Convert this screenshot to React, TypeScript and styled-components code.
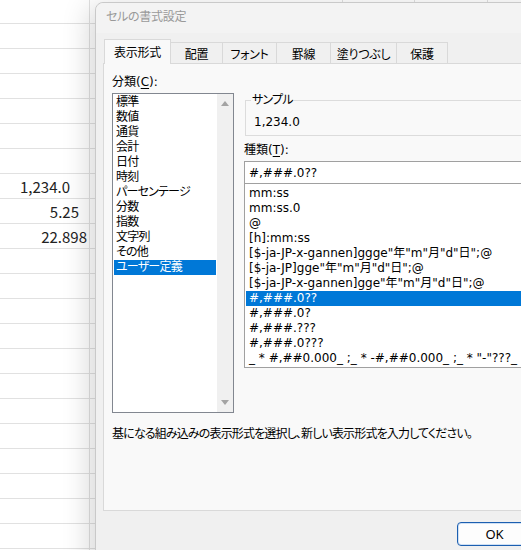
import { FC } from 'react'
import styled, { createGlobalStyle } from 'styled-components'

const GlobalStyle = createGlobalStyle`
  html, body {
    margin: 0;
    padding: 0;
    background: #fff;
    overflow: hidden;
  }
  body {
    font-family: "DejaVu Sans", "Noto Sans CJK JP", sans-serif;
    font-feature-settings: "palt";
    font-size: 12px;
    color: #000;
  }
`

const TABS = [
  { label: '表示形式', w: 67 },
  { label: '配置', w: 53 },
  { label: 'フォント', w: 55 },
  { label: '罫線', w: 55 },
  { label: '塗りつぶし', w: 67 },
  { label: '保護', w: 52 },
]

const CATEGORIES = ['標準', '数値', '通貨', '会計', '日付', '時刻', 'パーセンテージ', '分数', '指数', '文字列', 'その他', 'ユーザー定義']

const FORMATS = [
  'mm:ss',
  'mm:ss.0',
  '@',
  '[h]:mm:ss',
  '[$-ja-JP-x-gannen]ggge"年"m"月"d"日";@',
  '[$-ja-JP]gge"年"m"月"d"日";@',
  '[$-ja-JP-x-gannen]gge"年"m"月"d"日";@',
  '#,###.0??',
  '#,###.0?',
  '#,###.???',
  '#,###.0???',
  '_ * #,##0.000_ ;_ * -#,##0.000_ ;_ * "-"???_ ;_ @_ ',
]

// sheet rows: value cells sit in rows 7..9
const SHEET_VALUES: Record<number, { text: string, pad: number }> = {
  7: { text: '1,234.0', pad: 19 },
  8: { text: '5.25', pad: 10 },
  9: { text: '22.898', pad: 2 },
}
const COLUMN_WIDTHS = [90, 253, 72, 73, 73]

const App: FC = () => {
  return (
    <Screen>
      <GlobalStyle />
      <Sheet>
        {Array.from({ length: 23 }).map((_, r) => (
          <SheetRow key={r} $first={r === 0}>
            {COLUMN_WIDTHS.map((w, c) => (
              <SheetCell key={c} $w={w} $pad={c === 0 && SHEET_VALUES[r] ? SHEET_VALUES[r].pad : 4}>
                {c === 0 && SHEET_VALUES[r] ? SHEET_VALUES[r].text : ''}
              </SheetCell>
            ))}
          </SheetRow>
        ))}
      </Sheet>

      <Dialog>
        <TitleBar>セルの書式設定</TitleBar>
        <DialogBody>
          <TabStrip>
            {TABS.map((t, i) => (
              <Tab key={t.label} $w={t.w} $active={i === 0}>{t.label}</Tab>
            ))}
          </TabStrip>
          <Panel>
            <LeftColumn>
              <FieldLabel>分類(<u>C</u>):</FieldLabel>
              <CategoryBox>
                <ItemColumn>
                  {CATEGORIES.map((c, i) => (
                    <ListItem key={c} $selected={i === CATEGORIES.length - 1} $pad={2} $kana>{c}</ListItem>
                  ))}
                </ItemColumn>
                <ScrollTrack>
                  <Arrow $dir="up" />
                  <Arrow $dir="down" />
                </ScrollTrack>
              </CategoryBox>
            </LeftColumn>

            <RightColumn>
              <SampleGroup>
                <SampleLegend>サンプル</SampleLegend>
                <SampleValue>1,234.0</SampleValue>
              </SampleGroup>
              <FieldLabel>種類(<u>T</u>):</FieldLabel>
              <FormatInput>#,###.0??</FormatInput>
              <FormatList>
                {FORMATS.map((f, i) => (
                  <ListItem key={f} $selected={i === 7} $pad={3}>{f}</ListItem>
                ))}
              </FormatList>
            </RightColumn>

            <Description>基になる組み込みの表示形式を選択し、新しい表示形式を入力してください。</Description>
          </Panel>
          <Footer>
            <DialogButton $primary>OK</DialogButton>
            <DialogButton>キャンセル</DialogButton>
          </Footer>
        </DialogBody>
      </Dialog>
    </Screen>
  )
}

export default App

const Screen = styled.div`
  position: relative;
  width: 521px;
  height: 550px;
  overflow: hidden;
  background: #fff;
`
const Sheet = styled.div`
  display: flex;
  flex-direction: column;
`
const SheetRow = styled.div<{ $first?: boolean }>`
  display: flex;
  box-sizing: border-box;
  height: ${p => p.$first ? 24 : 25}px;
  border-bottom: 1px solid #e1e1e1;
`
const SheetCell = styled.div<{ $w: number, $pad: number }>`
  box-sizing: border-box;
  flex: 0 0 ${p => p.$w}px;
  border-right: 1px solid #e1e1e1;
  display: flex;
  align-items: center;
  justify-content: flex-end;
  padding-right: ${p => p.$pad}px;
  font-family: "Noto Sans CJK JP", sans-serif;
  font-size: 15px;
  color: #222;
`
const Dialog = styled.div`
  position: absolute;
  left: 95px;
  top: 2px;
  width: 533px;
  height: 600px;
  box-sizing: border-box;
  background: #f0f0f0;
  border: 1px solid #c9c9c9;
  border-radius: 8px 0 0 0;
  box-shadow: -6px 4px 28px rgba(0, 0, 0, 0.16);
  display: flex;
  flex-direction: column;
`
const TitleBar = styled.div`
  box-sizing: border-box;
  height: 30px;
  display: flex;
  align-items: center;
  padding: 0 0 5px 10px;
  color: #999;
  font-family: "Noto Sans CJK JP", sans-serif;
  font-size: 12px;
  letter-spacing: -0.3px;
  background: #f3f3f3;
  border-radius: 8px 0 0 0;
`
const DialogBody = styled.div`
  display: flex;
  flex-direction: column;
  padding: 6px 7px 0 7px;
`
const TabStrip = styled.div`
  display: flex;
  align-items: flex-end;
  height: 25px;
  padding-left: 1px;
  position: relative;
  z-index: 1;
`
const Tab = styled.div<{ $w: number, $active?: boolean }>`
  box-sizing: border-box;
  width: ${p => p.$w}px;
  height: ${p => p.$active ? 25 : 21}px;
  margin-bottom: ${p => p.$active ? 0 : 1}px;
  margin-left: -1px;
  border: 1px solid #d9d9d9;
  border-bottom: none;
  background: ${p => p.$active ? '#f9f9f9' : '#f0f0f0'};
  display: flex;
  align-items: center;
  justify-content: center;
  padding-bottom: ${p => p.$active ? 2 : 0}px;
  font-family: "Noto Sans CJK JP", sans-serif;
  font-size: 12px;
  letter-spacing: -0.3px;
  white-space: nowrap;
  &:first-child {
    margin-left: 0;
  }
`
const Panel = styled.div`
  box-sizing: border-box;
  height: 448px;
  margin-top: -1px;
  border: 1px solid #d9d9d9;
  background: #f9f9f9;
  display: grid;
  grid-template-columns: 122px 1fr;
  grid-template-rows: auto 1fr;
  column-gap: 10px;
  padding: 10px 9px 0 8px;
`
const LeftColumn = styled.div`
  display: flex;
  flex-direction: column;
`
const RightColumn = styled.div`
  display: flex;
  flex-direction: column;
  padding-top: 18px;
`
const FieldLabel = styled.div`
  line-height: 16px;
  height: 16px;
  margin-bottom: 3px;
  white-space: nowrap;
  u {
    text-underline-offset: 2px;
  }
`
const CategoryBox = styled.div`
  box-sizing: border-box;
  height: 320px;
  border: 1px solid #828790;
  background: #fff;
  display: flex;
`
const ItemColumn = styled.div`
  flex: 1;
  display: flex;
  flex-direction: column;
  padding: 1px;
  min-width: 0;
  overflow: hidden;
`
const ListItem = styled.div<{ $selected?: boolean, $pad: number, $kana?: boolean }>`
  height: 15px;
  line-height: 15px;
  padding-left: ${p => p.$pad}px;
  white-space: pre;
  overflow: hidden;
  letter-spacing: ${p => p.$kana ? '-0.8px' : '0'};
  background: ${p => p.$selected ? '#0078d7' : 'transparent'};
  color: ${p => p.$selected ? '#fff' : '#000'};
`
const ScrollTrack = styled.div`
  flex: 0 0 16px;
  background: #f0f0f0;
  display: flex;
  flex-direction: column;
  justify-content: space-between;
  align-items: center;
  padding: 7px 0;
`
const Arrow = styled.div<{ $dir: 'up' | 'down' }>`
  width: 0;
  height: 0;
  border-left: 4px solid transparent;
  border-right: 4px solid transparent;
  ${p => p.$dir === 'up' ? 'border-bottom: 5px solid #a3a3a3;' : 'border-top: 5px solid #a3a3a3;'}
`
const SampleGroup = styled.fieldset`
  margin: 0 0 6px 1px;
  padding: 0 0 5px 5px;
  border: 1px solid #dcdcdc;
  min-width: 0;
`
const SampleLegend = styled.legend`
  padding: 0 1px;
  line-height: 16px;
  font-size: 12px;
  letter-spacing: -0.8px;
`
const SampleValue = styled.div`
  line-height: 15px;
  margin: 7px 0 0 3px;
`
const FormatInput = styled.div`
  box-sizing: border-box;
  height: 22px;
  border: 1px solid #a0a0a0;
  border-bottom: none;
  background: #fff;
  display: flex;
  align-items: center;
  padding: 1px 0 0 4px;
  white-space: nowrap;
`
const FormatList = styled.div`
  box-sizing: border-box;
  height: 185px;
  border: 1px solid #a0a0a0;
  background: #fff;
  padding: 2px 0 0 1px;
  display: flex;
  flex-direction: column;
  overflow: hidden;
`
const Description = styled.div`
  grid-column: 1 / span 2;
  margin-top: 13px;
  line-height: 16px;
  letter-spacing: -0.85px;
  white-space: nowrap;
`
const Footer = styled.div`
  display: flex;
  justify-content: flex-end;
  gap: 8px;
  padding: 11px 5px 0 0;
`
const DialogButton = styled.div<{ $primary?: boolean }>`
  box-sizing: border-box;
  width: 75px;
  height: 24px;
  border-radius: 4px;
  background: #fdfdfd;
  border: 1px solid ${p => p.$primary ? '#1c5fb0' : '#d0d0d0'};
  box-shadow: ${p => p.$primary ? 'inset 0 0 0 1px #cfe0f4' : 'none'};
  display: flex;
  align-items: center;
  justify-content: center;
  font-size: 13px;
  font-family: "Noto Sans", "Noto Sans CJK JP", sans-serif;
`
